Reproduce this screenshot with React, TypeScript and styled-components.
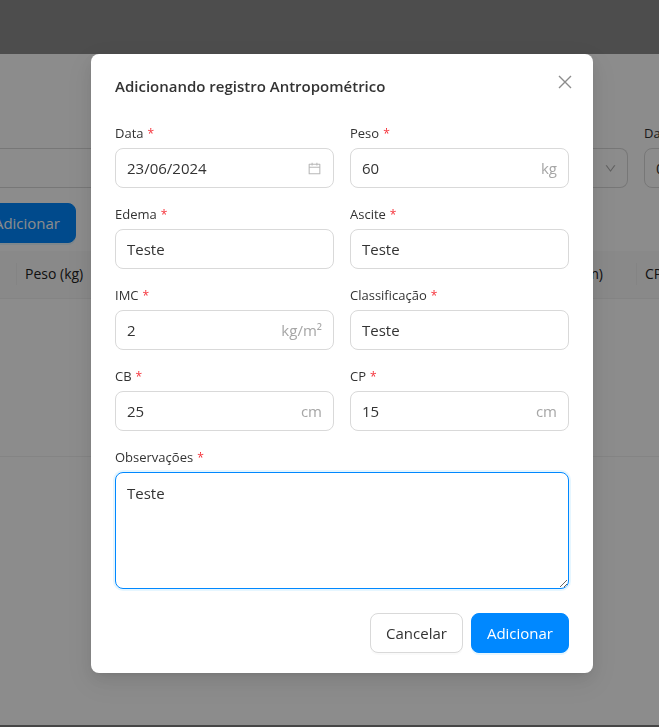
import React from "react";
import styled, { createGlobalStyle, css } from "styled-components";
import { AiOutlineCalendar, AiOutlineDown } from "react-icons/ai";

const GlobalStyle = createGlobalStyle`
  *, *::before, *::after { box-sizing: border-box; }
  body {
    margin: 0;
    font-family: "Open Sans", "Noto Sans", sans-serif;
    font-size: 14px;
    line-height: 22px;
    color: #333;
    background: #fff;
  }
  button, input, textarea { font-family: inherit; color: inherit; }
`;

const Page = styled.div`
  display: flex;
  flex-direction: column;
  height: 100vh;
  overflow: hidden;
`;

const TopBar = styled.header`
  flex: none;
  height: 54px;
  background: #8c8c8c;
`;

const BottomBar = styled.footer`
  flex: none;
  height: 2px;
  background: #808080;
`;

const Content = styled.main`
  flex: 1;
  min-height: 0;
  padding-top: 68px;
  background: #fff;
`;

const Filters = styled.div`
  display: flex;
  align-items: flex-end;
  gap: 16px;
`;

const filterBox = css`
  height: 40px;
  border: 1px solid #d9d9d9;
  background: #fff;
`;

const FilterSelect = styled.button`
  ${filterBox}
  flex: 1;
  display: flex;
  align-items: center;
  justify-content: flex-end;
  padding: 0 10px;
  border-left: 0;
  border-radius: 0 8px 8px 0;
  color: #b0b0b0;
`;

const FilterField = styled.div`
  flex: none;
  width: 15px;
  overflow: hidden;
  white-space: nowrap;
`;

const FilterLabel = styled.label`
  display: block;
  height: 26px;
  font-size: 13px;
`;

const FilterInput = styled.input`
  ${filterBox}
  display: block;
  width: 160px;
  padding: 0 11px;
  border-radius: 8px;
  font-size: 15px;
`;

const Actions = styled.div`
  display: flex;
  justify-content: flex-end;
  width: 76px;
  margin: 15px 0 8px;
`;

const Button = styled.button<{ $primary?: boolean }>`
  flex: none;
  height: 40px;
  padding: 0 15px;
  border: 1px solid ${(p) => (p.$primary ? "#0088ff" : "#d9d9d9")};
  border-radius: 8px;
  background: ${(p) => (p.$primary ? "#0088ff" : "#fff")};
  color: ${(p) => (p.$primary ? "#fff" : "#333")};
  box-shadow: 0 2px 0 ${(p) => (p.$primary ? "rgba(5, 165, 255, 0.1)" : "rgba(0, 0, 0, 0.02)")};
  font-size: 15px;
  font-weight: ${(p) => (p.$primary ? 500 : 400)};
  line-height: 24px;
`;

const Table = styled.table`
  width: 100%;
  table-layout: fixed;
  border-collapse: collapse;
  border-bottom: 1px solid #f0f0f0;
`;

const Th = styled.th<{ $width?: number; $end?: boolean }>`
  ${(p) => p.$width && `width: ${p.$width}px;`}
  height: 47px;
  padding: 0;
  overflow: hidden;
  border-bottom: 1px solid #f0f0f0;
  background: #fafafa;
  color: #222;
  font-size: 14px;
  font-weight: 500;
  text-align: ${(p) => (p.$end ? "right" : "left")};
  white-space: nowrap;
`;

const ThText = styled.div<{ $divider?: boolean; $end?: boolean }>`
  padding: 0 ${(p) => (p.$end ? 33 : 8)}px;
  border-left: ${(p) => (p.$divider ? "1px solid #f0f0f0" : "0")};
`;

const EmptyCell = styled.td`
  height: 158px;
`;

const Mask = styled.div`
  position: fixed;
  inset: 0;
  padding: 54px 66px 54px 91px;
  overflow: auto;
  background: rgba(0, 0, 0, 0.45);
`;

const Dialog = styled.section`
  padding: 20px 24px;
  border-radius: 8px;
  background: #fff;
  box-shadow:
    0 6px 16px 0 rgba(0, 0, 0, 0.08),
    0 3px 6px -4px rgba(0, 0, 0, 0.12),
    0 9px 28px 8px rgba(0, 0, 0, 0.05);
`;

const DialogHeader = styled.div`
  display: flex;
  align-items: flex-start;
  justify-content: space-between;
  margin-bottom: 24px;
`;

const Title = styled.h2`
  margin: 0;
  font-size: 15px;
  font-weight: 600;
  line-height: 24px;
`;

const CloseButton = styled.button`
  display: flex;
  justify-content: center;
  width: 22px;
  margin-right: -7px;
  padding: 0;
  border: 0;
  background: none;
  color: #8c8c8c;
`;

const FormGrid = styled.form`
  display: grid;
  grid-template-columns: 1fr 1fr;
  gap: 15px 16px;
`;

const Field = styled.div<{ $wide?: boolean }>`
  min-width: 0;
  ${(p) => p.$wide && "grid-column: 1 / -1;"}
`;

const Label = styled.label`
  display: block;
  height: 26px;
  font-size: 13px;
  line-height: 22px;
`;

const Required = styled.span`
  margin-left: 4px;
  color: #f5333b;
  font-size: 12px;
`;

const InputBox = styled.div`
  display: flex;
  align-items: center;
  height: 40px;
  padding: 0 11px;
  border: 1px solid #d9d9d9;
  border-radius: 8px;
`;

const Input = styled.input`
  flex: 1;
  min-width: 0;
  padding: 0;
  border: 0;
  outline: 0;
  background: none;
  font-size: 15px;
  line-height: 24px;
`;

const Suffix = styled.span`
  display: flex;
  color: #a6a6a6;
  font-size: 15px;
`;

const CalendarSuffix = styled(Suffix)`
  color: #b8b8b8;
`;

const TextArea = styled.textarea`
  display: block;
  width: 100%;
  height: 117px;
  padding: 8px 11px;
  border: 1px solid #0088ff;
  border-radius: 8px;
  outline: 0;
  box-shadow: 0 0 0 2px rgba(5, 165, 255, 0.1);
  font-size: 15px;
  line-height: 24px;
  resize: vertical;
`;

const DialogFooter = styled.div`
  grid-column: 1 / -1;
  display: flex;
  justify-content: flex-end;
  gap: 8px;
  margin-top: 9px;
`;

type FieldData = { id: string; label: string; value: string; suffix?: string; date?: boolean };

const fields: FieldData[] = [
  { id: "data", label: "Data", value: "23/06/2024", date: true },
  { id: "peso", label: "Peso", value: "60", suffix: "kg" },
  { id: "edema", label: "Edema", value: "Teste" },
  { id: "ascite", label: "Ascite", value: "Teste" },
  { id: "imc", label: "IMC", value: "2", suffix: "kg/m²" },
  { id: "classificacao", label: "Classificação", value: "Teste" },
  { id: "cb", label: "CB", value: "25", suffix: "cm" },
  { id: "cp", label: "CP", value: "15", suffix: "cm" },
];

function CloseIcon() {
  return (
    <svg width="16" height="16" viewBox="0 0 16 16" fill="none" stroke="currentColor" strokeWidth="1.4" aria-hidden="true">
      <path d="M2 2 14 14M14 2 2 14" />
    </svg>
  );
}

function RequiredLabel({ id, children }: { id: string; children: React.ReactNode }) {
  return (
    <Label htmlFor={id}>
      {children}
      <Required>*</Required>
    </Label>
  );
}

export default function App() {
  return (
    <>
      <GlobalStyle />
      <Page>
        <TopBar />
        <Content>
          <Filters>
            <FilterSelect type="button" aria-label="Filtro">
              <AiOutlineDown size={13} />
            </FilterSelect>
            <FilterField>
              <FilterLabel htmlFor="filtro-data">Data</FilterLabel>
              <FilterInput id="filtro-data" defaultValue="01/06/2024" />
            </FilterField>
          </Filters>
          <Actions>
            <Button type="button" $primary>Adicionar</Button>
          </Actions>
          <Table>
            <thead>
              <tr>
                <Th $width={16} />
                <Th><ThText $divider>Peso (kg)</ThText></Th>
                <Th $end><ThText $end>CB (cm)</ThText></Th>
                <Th $width={23}><ThText $divider>CP (cm)</ThText></Th>
              </tr>
            </thead>
            <tbody>
              <tr><EmptyCell colSpan={4} /></tr>
            </tbody>
          </Table>
        </Content>
        <BottomBar />
      </Page>
      <Mask>
        <Dialog role="dialog" aria-modal="true" aria-labelledby="dialog-title">
          <DialogHeader>
            <Title id="dialog-title">Adicionando registro Antropométrico</Title>
            <CloseButton type="button" aria-label="Fechar">
              <CloseIcon />
            </CloseButton>
          </DialogHeader>
          <FormGrid onSubmit={(e) => e.preventDefault()}>
            {fields.map((f) => (
              <Field key={f.id}>
                <RequiredLabel id={f.id}>{f.label}</RequiredLabel>
                <InputBox>
                  <Input id={f.id} defaultValue={f.value} />
                  {f.suffix && <Suffix>{f.suffix}</Suffix>}
                  {f.date && <CalendarSuffix><AiOutlineCalendar size={15} /></CalendarSuffix>}
                </InputBox>
              </Field>
            ))}
            <Field $wide>
              <RequiredLabel id="observacoes">Observações</RequiredLabel>
              <TextArea id="observacoes" defaultValue="Teste" />
            </Field>
            <DialogFooter>
              <Button type="button">Cancelar</Button>
              <Button type="submit" $primary>Adicionar</Button>
            </DialogFooter>
          </FormGrid>
        </Dialog>
      </Mask>
    </>
  );
}
